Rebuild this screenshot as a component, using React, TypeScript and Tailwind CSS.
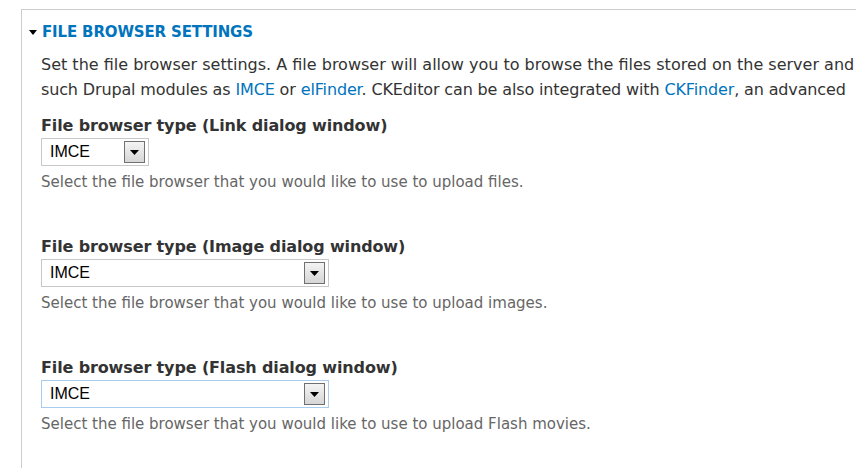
import React from 'react';

const Arrow = () => (
  <span className="flex h-[22px] w-[21px] items-center justify-center border border-[#707070] bg-gradient-to-b from-[#f4f4f4] to-[#d6d6d6]">
    <svg width="9" height="5" viewBox="0 0 9 5">
      <path d="M0 0h9L4.5 5z" fill="#000" />
    </svg>
  </span>
);

const FakeSelect = ({ width, focused }: { width: string; focused?: boolean }) => (
  <div
    className={`flex h-[28px] ${width} items-center justify-between border pl-[8px] pr-[3px] ${
      focused ? 'border-[#a8cbee]' : 'border-[#c8c8c8]'
    }`}
  >
    <span className="text-[16px] leading-none text-black [font-family:'Liberation_Sans',Arial,sans-serif]">IMCE</span>
    <Arrow />
  </div>
);

const fields = [
  { label: 'File browser type (Link dialog window)', width: 'w-[108px]', desc: 'files.' },
  { label: 'File browser type (Image dialog window)', width: 'w-[288px]', desc: 'images.' },
  { label: 'File browser type (Flash dialog window)', width: 'w-[288px]', desc: 'Flash movies.', focused: true },
];

export default function App() {
  return (
    <div className="h-[468px] w-[856px] overflow-hidden bg-white pl-[21px] pt-[9px] text-[#333] [font-family:'DejaVu_Sans',sans-serif]">
      <fieldset className="h-[520px] w-[900px] border border-[#cccccc]">
        <div className="mt-[12px] flex items-center pl-[7px]">
          <svg width="8" height="5" viewBox="0 0 8 5" className="mr-[5px]">
            <path d="M0 0h8L4 5z" fill="#000" />
          </svg>
          <span className="text-[15px] font-bold leading-[20px] tracking-[-0.15px] text-[#0074bd]">
            FILE BROWSER SETTINGS
          </span>
        </div>
        <div className="pl-[19px]">
          <p className="mt-[10px] whitespace-nowrap text-[16px] leading-[25px]">
            Set the file browser settings. A file browser will allow you to browse the files stored on the server and
            <br />
            <span className="tracking-[-0.14px]">
              such Drupal modules as <span className="text-[#0074bd]">IMCE</span> or{' '}
              <span className="text-[#0074bd]">elFinder</span>. CKEditor can be also integrated with{' '}
              <span className="text-[#0074bd]">CKFinder</span>, an advanced
            </span>
          </p>
          {fields.map((f, i) => (
            <div key={f.label} className={i === 0 ? 'mt-[14px]' : 'mt-[45px]'}>
              <div className="text-[16px] font-bold leading-[20px] tracking-[-0.13px]">{f.label}</div>
              <div className="mt-[2px]">
                <FakeSelect width={f.width} focused={f.focused} />
              </div>
              <div className="mt-[6px] text-[15px] leading-[20px] text-[#666]">
                Select the file browser that you would like to use to upload {f.desc}
              </div>
            </div>
          ))}
        </div>
      </fieldset>
    </div>
  );
}
